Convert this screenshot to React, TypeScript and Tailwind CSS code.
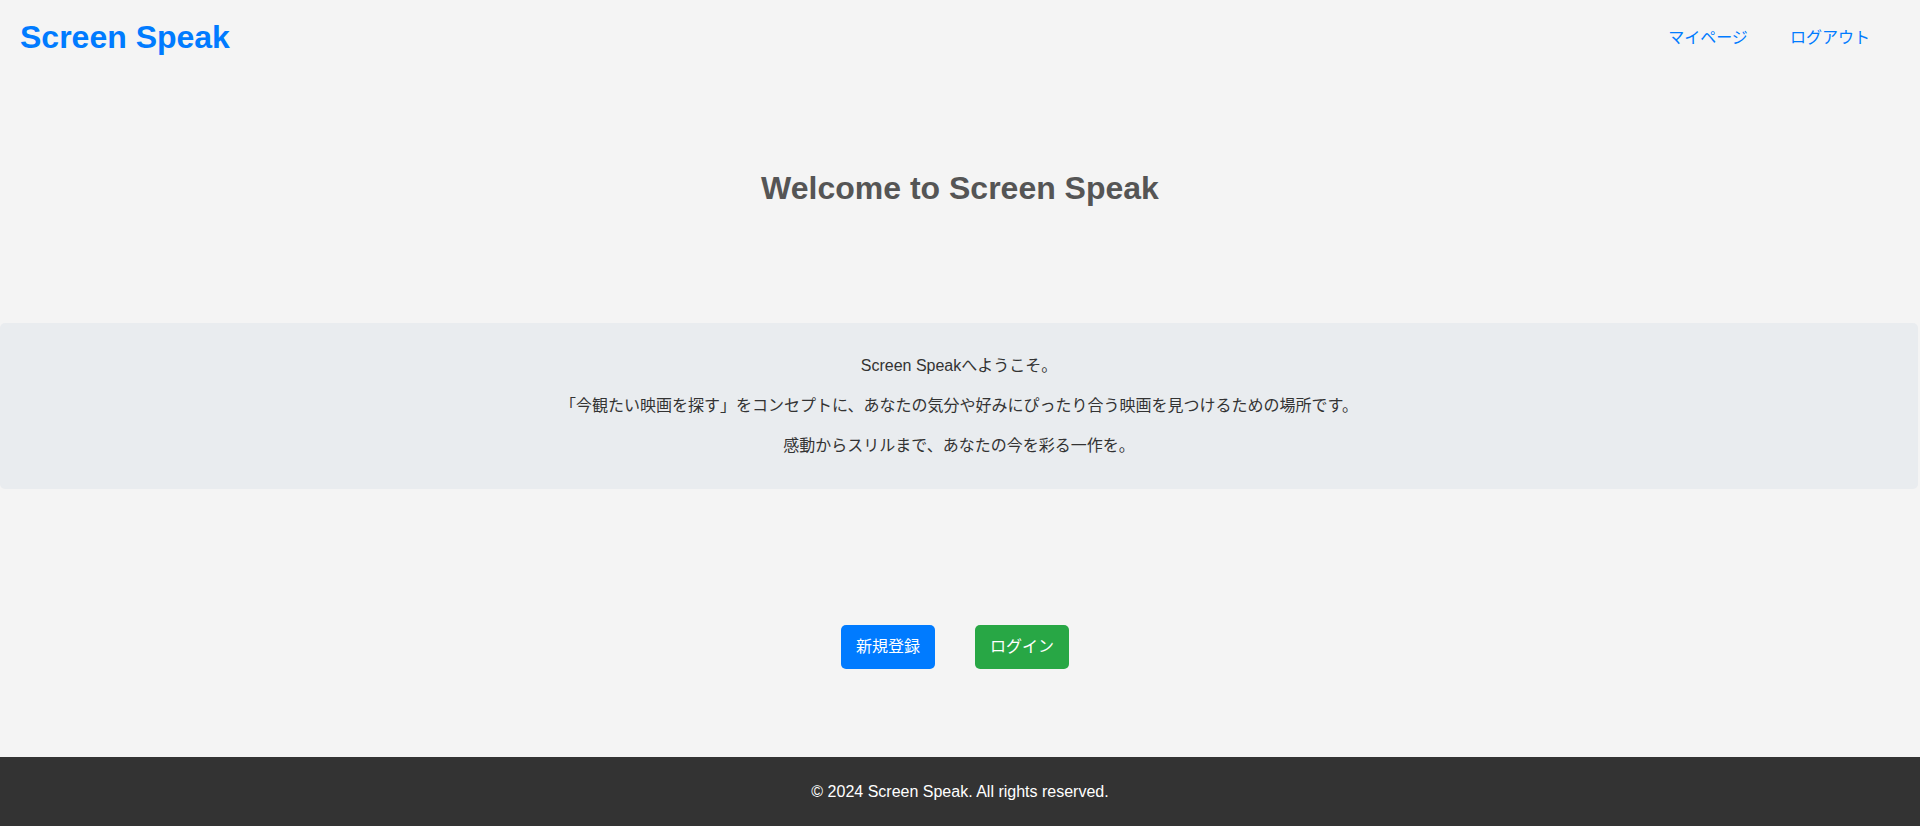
import React from "react";

const font = { fontFamily: '"Liberation Sans", Arial, "Noto Sans CJK JP", sans-serif' };

export default function App() {
  return (
    <div className="min-h-[826px] bg-[#f4f4f4] flex flex-col" style={font}>
      <header className="h-[75px] flex items-center justify-between pl-[20px]">
        <div className="text-[32px] font-bold text-[#007bff] leading-[37px]">Screen Speak</div>
        <nav className="flex items-center mr-[50px] text-[16px] text-[#007bff]">
          <a className="w-[80px] text-center">マイページ</a>
          <a className="w-[80px] text-center ml-[42px]">ログアウト</a>
        </nav>
      </header>
      <main className="flex flex-col items-center">
        <h2 className="mt-[95px] text-[32px] leading-[37px] font-bold text-[#555555]">Welcome to Screen Speak</h2>
        <section className="mt-[116px] w-[1918px] self-start bg-[#e9ecef] rounded-[5px] p-[15px] text-center text-[16px] leading-[24px] text-[#333333]">
          <p className="my-4">Screen Speakへようこそ。</p>
          <p className="my-4">「今観たい映画を探す」をコンセプトに、あなたの気分や好みにぴったり合う映画を見つけるための場所です。</p>
          <p className="my-4">感動からスリルまで、あなたの今を彩る一作を。</p>
        </section>
        <div className="mt-[136px] mr-[10px] flex gap-[40px]">
          <button className="w-[94px] h-[44px] rounded-[5px] bg-[#007bff] text-white text-[16px]">新規登録</button>
          <button className="w-[94px] h-[44px] rounded-[5px] bg-[#28a745] text-white text-[16px]">ログイン</button>
        </div>
      </main>
      <footer className="mt-[88px] h-[69px] bg-[#333333] text-white text-[16px] flex items-center justify-center">
        © 2024 Screen Speak. All rights reserved.
      </footer>
    </div>
  );
}
